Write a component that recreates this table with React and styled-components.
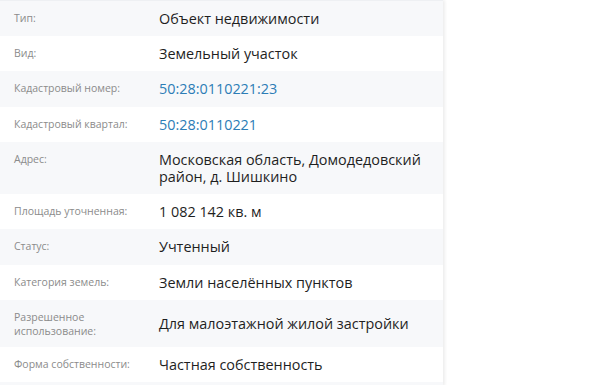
import React from "react";
import styled, { createGlobalStyle } from "styled-components";

const GlobalStyle = createGlobalStyle`
  html, body {
    margin: 0;
    padding: 0;
    background: #fff;
    overflow: hidden;
  }
  body {
    font-family: "Open Sans", "Noto Sans", "DejaVu Sans", sans-serif;
  }
`;

const Panel = styled.div`
  width: 443px;
  height: 385px;
  background: #fff;
  border-top: 1px solid #eef0f3;
  box-shadow: 2px 0 3px rgba(0, 0, 0, 0.07);
  overflow: hidden;
`;

const Row = styled.div`
  display: flex;
  align-items: center;
  min-height: 17.2px;
  padding: 9px 0 9px 14px;
  background: #fff;
  &:nth-child(odd) {
    background: #f7f8fa;
  }
`;

const Label = styled.div`
  flex: 0 0 145px;
  align-self: flex-start;
  padding-top: 1px;
  font-size: 10.5px;
  line-height: 14px;
  color: #8b8b8b;
`;

const Value = styled.div`
  flex: 1;
  font-size: 14.4px;
  line-height: 17.2px;
  color: ${(p) => (p.$link ? "#2d7db6" : "#1f1f1f")};
`;

const rows = [
  { label: "Тип:", value: "Объект недвижимости" },
  { label: "Вид:", value: "Земельный участок" },
  { label: "Кадастровый номер:", value: "50:28:0110221:23", link: true },
  { label: "Кадастровый квартал:", value: "50:28:0110221", link: true },
  { label: "Адрес:", value: "Московская область, Домодедовский район, д. Шишкино" },
  { label: "Площадь уточненная:", value: "1 082 142 кв. м" },
  { label: "Статус:", value: "Учтенный" },
  { label: "Категория земель:", value: "Земли населённых пунктов" },
  { label: "Разрешенное использование:", value: "Для малоэтажной жилой застройки" },
  { label: "Форма собственности:", value: "Частная собственность" },
  { label: "", value: "" },
];

export default function App() {
  return (
    <>
      <GlobalStyle />
      <Panel>
        {rows.map((r, i) => (
          <Row key={i}>
            <Label>{r.label}</Label>
            <Value $link={r.link}>{r.value}</Value>
          </Row>
        ))}
      </Panel>
    </>
  );
}
